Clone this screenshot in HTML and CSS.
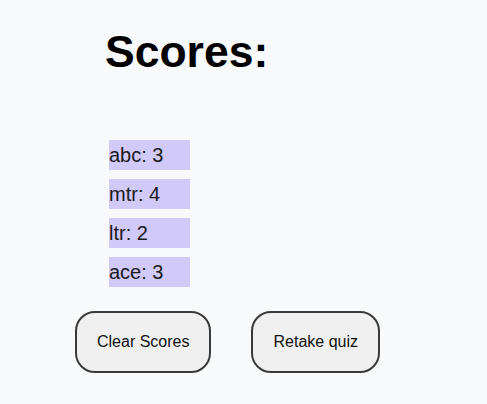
FILE: index.html
```html
<!DOCTYPE html>
<html>
<head>
<meta charset="utf-8">
<link rel="stylesheet" href="styles.css">
</head>
<body>
<main class="page">
  <h1 class="title">Scores:</h1>
  <ul class="scores">
    <li class="score">abc: 3</li>
    <li class="score">mtr: 4</li>
    <li class="score">ltr: 2</li>
    <li class="score">ace: 3</li>
  </ul>
  <div class="actions">
    <button class="btn">Clear Scores</button>
    <button class="btn">Retake quiz</button>
  </div>
</main>
</body>
</html>
```
FILE: styles.css
```css
html, body {
  margin: 0;
  padding: 0;
  background: #f8f9fb;
  font-family: "Liberation Sans", Arial, sans-serif;
  color: #111;
}
.page {
  padding: 0 0 0 75px;
}
.title {
  margin: 0;
  padding: 26px 0 0 30px;
  font-size: 44.5px;
  line-height: 52px;
  font-weight: bold;
  color: #000;
}
.scores {
  list-style: none;
  margin: 62px 0 0 34px;
  padding: 0;
  display: flex;
  flex-direction: column;
  gap: 9px;
}
.score {
  width: 81px;
  height: 30px;
  line-height: 30px;
  background: #d1c9f8;
  font-size: 20px;
  color: #1a1a1a;
}
.actions {
  display: flex;
  gap: 40px;
  margin-top: 24px;
}
.btn {
  height: 62px;
  padding: 0 20px;
  border: 2px solid #3a3a3a;
  border-radius: 20px;
  background: #f0f0f0;
  font-family: "Liberation Sans", Arial, sans-serif;
  font-size: 16px;
  color: #111;
}
```
